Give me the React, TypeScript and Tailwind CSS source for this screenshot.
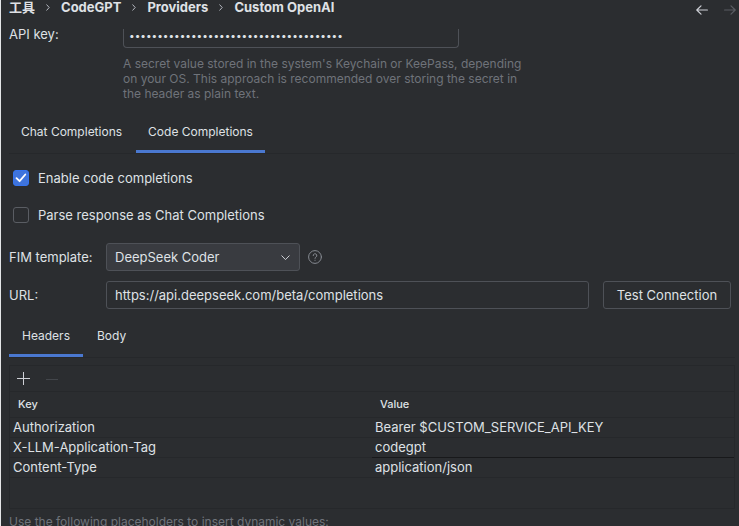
import { useState } from "react";

const headers = [
  { key: "Authorization", value: "Bearer $CUSTOM_SERVICE_API_KEY" },
  { key: "X-LLM-Application-Tag", value: "codegpt", strong: true },
  { key: "Content-Type", value: "application/json" },
];

const crumbs = ["工具", "CodeGPT", "Providers", "Custom OpenAI"];

function Arrow({ flip }: { flip?: boolean }) {
  return (
    <svg
      viewBox="0 0 12 10"
      className={flip ? "h-[10px] w-3 rotate-180" : "h-[10px] w-3"}
      fill="none"
      stroke="currentColor"
      strokeWidth="1.2"
      strokeLinecap="round"
      strokeLinejoin="round"
      aria-hidden="true"
    >
      <path d="M11.4 5H0.8M5 0.8L0.8 5L5 9.2" />
    </svg>
  );
}

function Breadcrumbs() {
  return (
    <header className="flex h-[26px] shrink-0 items-start justify-between pl-2 pr-[3px]">
      <nav aria-label="Breadcrumb" className="flex items-center text-[13px] leading-[15px] font-bold text-[#dfe1e5]">
        {crumbs.map((crumb, i) => (
          <span key={crumb} className="flex items-center">
            {i > 0 && (
              <svg viewBox="0 0 4 7" className="mx-[11px] h-[7px] w-1" fill="none" stroke="#b4b8bf" strokeWidth="1" aria-hidden="true">
                <path d="M0.5 0.5L3.2 3.5L0.5 6.5" />
              </svg>
            )}
            {crumb}
          </span>
        ))}
      </nav>
      <div className="flex gap-4 pt-[5px]">
        <button aria-label="Back" className="text-[#ced0d6]">
          <Arrow />
        </button>
        <button aria-label="Forward" className="text-[#5a5d63]" disabled>
          <Arrow flip />
        </button>
      </div>
    </header>
  );
}

export default function App() {
  const [enabled, setEnabled] = useState(true);
  const [parse, setParse] = useState(false);

  return (
    <div className="flex h-screen flex-col overflow-hidden border-l border-[#e4e5e7] bg-[#2b2d30] font-['Inter','Noto_Sans_CJK_SC',sans-serif] text-[13px] leading-4 text-[#dfe1e5]">
      <Breadcrumbs />
      <main className="flex min-h-0 flex-1 flex-col pr-1 pl-2">
        <div className="flex">
          <label htmlFor="api-key" className="w-[114px]">API key:</label>
          <div className="pt-[3px]">
            <input
              id="api-key"
              type="password"
              defaultValue="sk-0123456789abcdef0123456789abcdef012"
              className="block h-[19px] w-[336px] rounded-b-sm border border-t-0 border-[#4e5157] px-[5px] pb-[6px] text-[10px] outline-none"
            />
            <p className="mt-2 w-[408px] text-[12px] leading-[15px] text-[#6f737a]">
              A secret value stored in the system's Keychain or KeePass, depending on your OS. This approach is recommended over storing the secret in the header as plain text.
            </p>
          </div>
        </div>

        <div role="tablist" className="mt-3 flex gap-0.5 border-b border-[#26282b] text-[12px]">
          <button role="tab" aria-selected="false" className="h-10 px-3 pb-[3px]">Chat Completions</button>
          <button role="tab" aria-selected="true" className="h-10 border-b-3 border-[#4a78d0] px-3">Code Completions</button>
        </div>

        <label className="mt-4 flex items-center gap-[9px] pl-1">
          <input
            type="checkbox"
            checked={enabled}
            onChange={(e) => setEnabled(e.target.checked)}
            className="peer sr-only"
          />
          <span className="flex size-4 items-center justify-center rounded-[3px] border border-[#5a5d63] peer-checked:border-[#3574f0] peer-checked:bg-[#3f74dc]">
            {enabled && (
              <svg viewBox="0 0 12 12" className="size-3" fill="none" stroke="white" strokeWidth="1.8" strokeLinecap="round" strokeLinejoin="round" aria-hidden="true">
                <path d="M1.5 6.2L4.6 9.2L10.3 2.5" />
              </svg>
            )}
          </span>
          Enable code completions
        </label>
        <label className="mt-[21px] flex items-center gap-[9px] pl-1">
          <input
            type="checkbox"
            checked={parse}
            onChange={(e) => setParse(e.target.checked)}
            className="peer sr-only"
          />
          <span className="size-4 rounded-[3px] border border-[#5a5d63]" />
          Parse response as Chat Completions
        </label>

        <div className="mt-5 flex items-center">
          <label htmlFor="template" className="w-[97px]">FIM template:</label>
          <div className="relative">
            <select id="template" className="block h-7 w-[194px] appearance-none rounded-[3px] border border-[#4e5157] bg-[#393b40] px-2 outline-none">
              <option>DeepSeek Coder</option>
            </select>
            <svg viewBox="0 0 9 6" className="pointer-events-none absolute top-3 right-[10px] h-[6px] w-[9px]" fill="none" stroke="#ced0d6" strokeWidth="1" strokeLinecap="round" aria-hidden="true">
              <path d="M0.8 0.8L4.5 4.6L8.2 0.8" />
            </svg>
          </div>
          <button aria-label="Help" className="ml-2">
            <svg viewBox="0 0 14 14" className="size-[14px]" fill="none" stroke="#868a91" strokeWidth="1" strokeLinecap="round" aria-hidden="true">
              <circle cx="7" cy="7" r="6.4" />
              <path d="M5.2 5.6A1.8 1.8 0 1 1 7.9 7.1C7.3 7.5 7 7.8 7 8.4M7 10.2V10.4" />
            </svg>
          </button>
        </div>

        <div className="mt-[10px] flex items-center">
          <label htmlFor="url" className="w-[97px]">URL:</label>
          <input
            id="url"
            type="text"
            defaultValue="https://api.deepseek.com/beta/completions"
            className="h-7 min-w-0 flex-1 rounded-[3px] border border-[#4e5157] px-2 outline-none"
          />
          <button className="mr-1 ml-[14px] h-7 w-32 rounded-[3px] border border-[#4e5157]">Test Connection</button>
        </div>

        <div role="tablist" className="mt-2 flex gap-0.5 border-b border-[#26282b] text-[12px]">
          <button role="tab" aria-selected="true" className="h-10 border-b-3 border-[#4a78d0] px-[13px]">Headers</button>
          <button role="tab" aria-selected="false" className="h-10 px-3 pb-[3px]">Body</button>
        </div>

        <section className="mt-[7px] h-[144px] shrink-0 border border-[#26282b]">
          <div className="flex h-[26px] items-center gap-4 border-b border-[#26282b] px-[7px]">
            <button aria-label="Add">
              <svg viewBox="0 0 13 13" className="size-[13px]" stroke="#ced0d6" strokeWidth="1" aria-hidden="true">
                <path d="M6.5 0V13M0 6.5H13" />
              </svg>
            </button>
            <button aria-label="Remove" disabled>
              <svg viewBox="0 0 12 12" className="size-3" stroke="#43464b" strokeWidth="1" aria-hidden="true">
                <path d="M0 6.5H12" />
              </svg>
            </button>
          </div>
          <table className="w-full table-fixed border-collapse text-left">
            <thead>
              <tr className="h-[25px] border-b border-[#26282b] text-[11px]">
                <th className="px-2 font-medium">Key</th>
                <th className="px-2 font-medium">Value</th>
              </tr>
            </thead>
            <tbody>
              {headers.map((h) => (
                <tr key={h.key} className="h-5 border-b border-[#26282b]">
                  <td className="px-[3px]">{h.key}</td>
                  <td className={h.strong ? "border-b border-[#18191b] px-[3px]" : "px-[3px]"}>{h.value}</td>
                </tr>
              ))}
            </tbody>
          </table>
        </section>
        <p className="mt-[5px] text-[12px] text-[#6f737a]">Use the following placeholders to insert dynamic values:</p>
      </main>
    </div>
  );
}
